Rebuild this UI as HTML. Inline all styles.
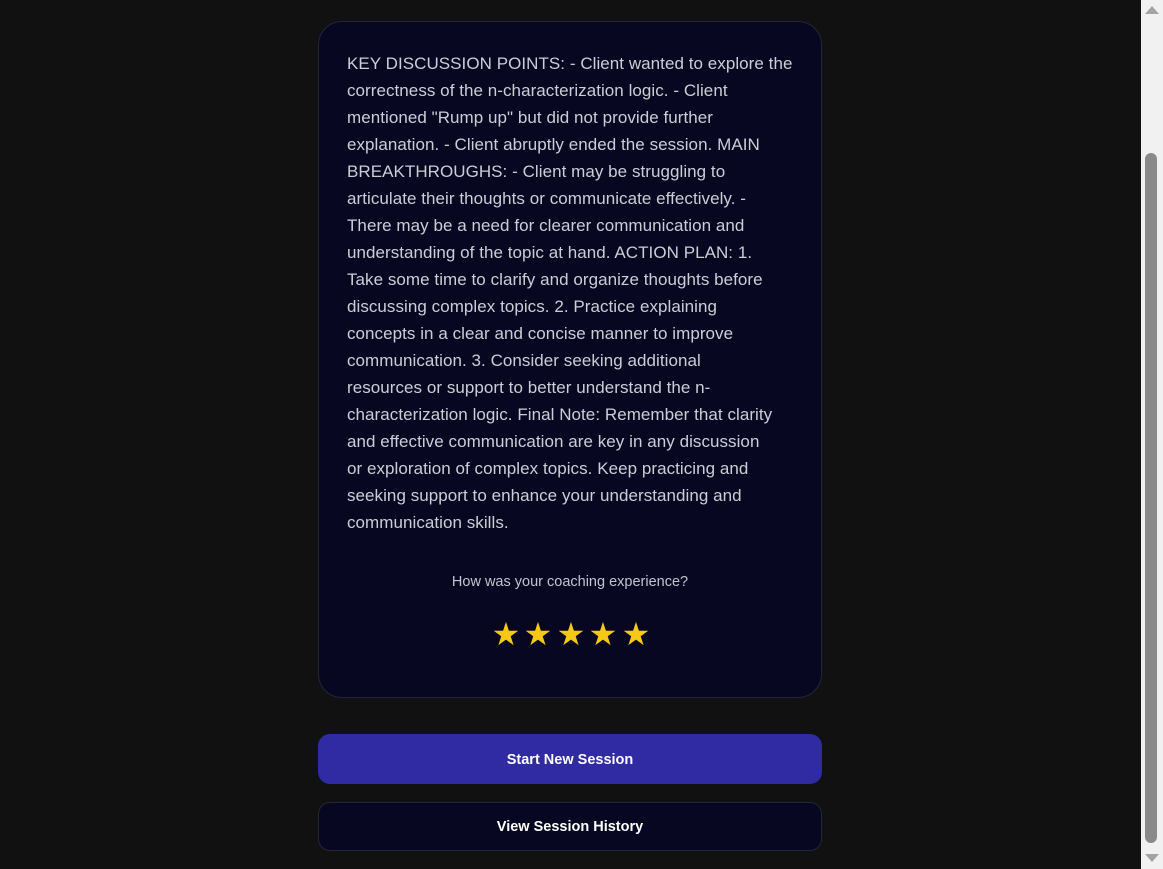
<!DOCTYPE html>
<html><head><style>
html,body{margin:0;padding:0;}
body{width:1163px;height:869px;background:#111111;position:relative;overflow:hidden;font-family:"Liberation Sans",sans-serif;}
.card{position:absolute;left:318px;top:21px;width:504px;height:677px;background:#070722;border:1px solid #24243a;border-radius:24px;box-sizing:border-box;}
.txt{position:absolute;left:28px;top:28px;width:470px;color:#cdcdd6;font-size:17px;line-height:27px;letter-spacing:0.05px;white-space:nowrap;}
.q{position:absolute;left:0;width:100%;top:552px;text-align:center;color:#c4c4cc;font-size:14.5px;}
.st{position:absolute;top:594px;width:30px;margin-left:-15px;text-align:center;color:#f7c815;font-size:32px;line-height:36px;}
.btn{position:absolute;left:318px;width:504px;box-sizing:border-box;border-radius:12px;text-align:center;color:#fff;font-weight:bold;font-size:14.5px;}
.b1{top:734px;height:50px;line-height:52px;background:#302aa3;}
.b2{top:802px;height:49px;line-height:48px;background:#070722;border:1px solid #24243a;}
.sb{position:absolute;left:1141px;top:0;width:22px;height:869px;background:#f1f1f1;}
.th{position:absolute;left:4px;top:153px;width:12px;height:690px;background:#8a8a8a;border-radius:6px;}
.a1,.a2{position:absolute;left:4px;width:0;height:0;border-left:7px solid transparent;border-right:7px solid transparent;}
.a1{top:6px;border-bottom:8px solid #a3a3a3;}
.a2{top:854px;border-top:8px solid #a3a3a3;}
</style></head><body>
<div class="card">
<div class="txt">KEY DISCUSSION POINTS: - Client wanted to explore the<br>correctness of the n-characterization logic. - Client<br>mentioned "Rump up" but did not provide further<br>explanation. - Client abruptly ended the session. MAIN<br>BREAKTHROUGHS: - Client may be struggling to<br>articulate their thoughts or communicate effectively. -<br>There may be a need for clearer communication and<br>understanding of the topic at hand. ACTION PLAN: 1.<br>Take some time to clarify and organize thoughts before<br>discussing complex topics. 2. Practice explaining<br>concepts in a clear and concise manner to improve<br>communication. 3. Consider seeking additional<br>resources or support to better understand the n-<br>characterization logic. Final Note: Remember that clarity<br>and effective communication are key in any discussion<br>or exploration of complex topics. Keep practicing and<br>seeking support to enhance your understanding and<br>communication skills.</div>
<div class="q">How was your coaching experience?</div>
<div class="st" style="left:187px">★</div>
<div class="st" style="left:219px">★</div>
<div class="st" style="left:252px">★</div>
<div class="st" style="left:284px">★</div>
<div class="st" style="left:317px">★</div>
</div>
<div class="btn b1">Start New Session</div>
<div class="btn b2">View Session History</div>
<div class="sb"><div class="a1"></div><div class="th"></div><div class="a2"></div></div>
</body></html>
